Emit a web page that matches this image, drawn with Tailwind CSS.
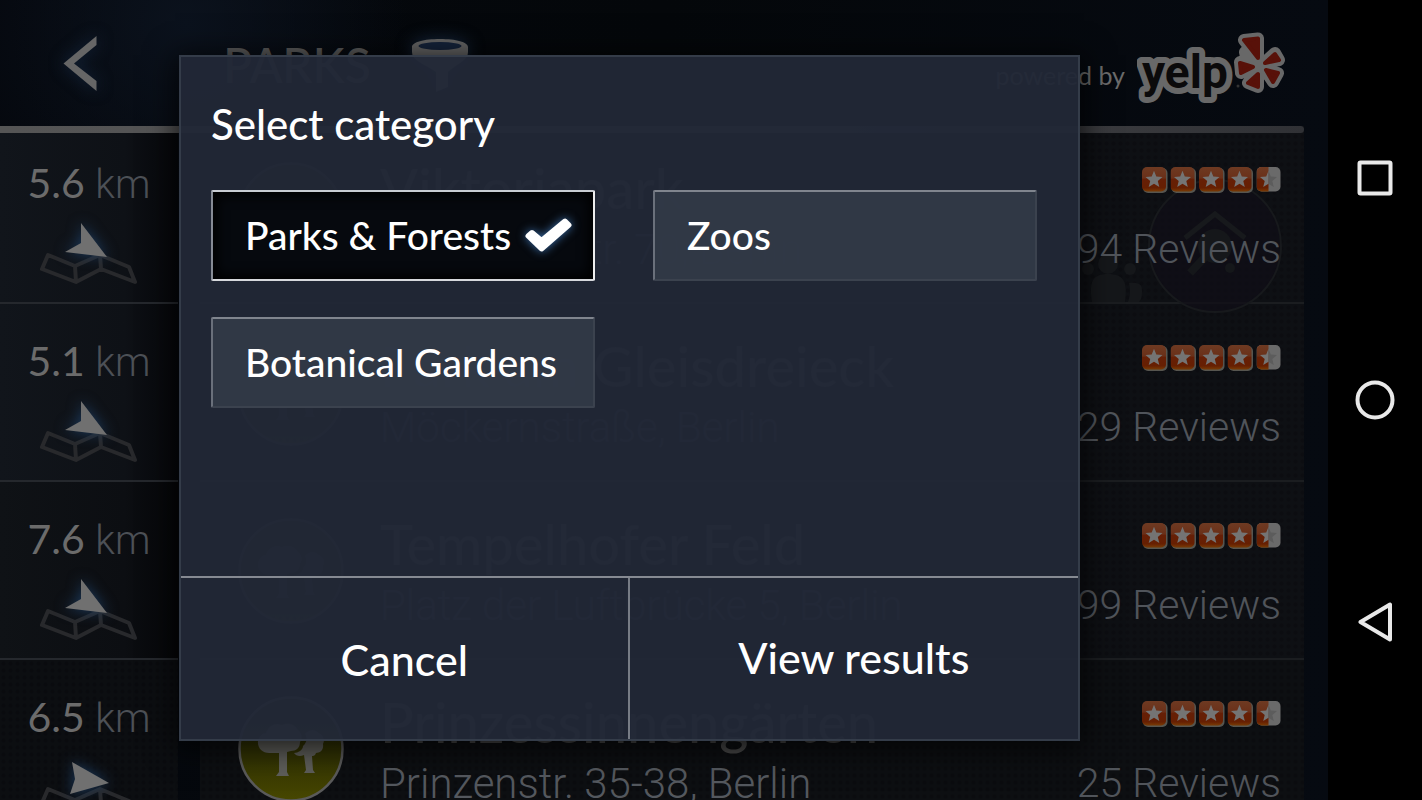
<!DOCTYPE html>
<html lang="en">
<head>
<meta charset="utf-8">
<title>Parks – Select category</title>
<script src="https://cdn.jsdelivr.net/npm/@tailwindcss/browser@4"></script>
</head>
<body class="flex h-screen overflow-hidden bg-black font-['Lato',sans-serif] text-white">

<svg class="absolute size-0" aria-hidden="true">
  <defs>
    <linearGradient id="tile" x1="0" y1="0" x2="0" y2="1">
      <stop offset="0" stop-color="#6e3a22"/><stop offset=".45" stop-color="#6a3019"/><stop offset=".5" stop-color="#661f06"/><stop offset=".85" stop-color="#661f02"/><stop offset="1" stop-color="#7a3c04"/>
    </linearGradient>
    <linearGradient id="olive" x1="0" y1="0" x2="0" y2="1">
      <stop offset="0" stop-color="#2a2a04"/><stop offset=".6" stop-color="#333403"/><stop offset="1" stop-color="#474700"/>
    </linearGradient>
    <symbol id="star" viewBox="0 0 26 26">
      <rect x="1" y="1" width="24.500" height="25" rx="5" fill="#56554f"/>
      <rect width="24" height="24.500" rx="5" fill="url(#tile)"/>
      <path d="M12 3.800l2.300 5.700 6.200.5-4.700 4 1.500 6.100-5.300-3.300-5.300 3.300 1.500-6.100-4.700-4 6.200-.5z" fill="#747474"/>
    </symbol>
    <symbol id="half" viewBox="0 0 26 26">
      <rect width="24" height="24.500" rx="5" fill="#6a6a6a"/>
      <path d="M12 0H5a5 5 0 0 0-5 5v14.500a5 5 0 0 0 5 5h7z" fill="url(#tile)"/>
      <path d="M12 3.800v13L6.700 20.100l1.500-6.100-4.700-4 6.200-.5z" fill="#747474"/>
      <path d="M12 3.800l2.300 5.700 6.200.5-4.700 4 1.500 6.100-5.300-3.300z" fill="#5c5c5c"/>
    </symbol>
    <symbol id="stars" viewBox="0 0 140 26">
      <use href="#star" x="1" width="26" height="26"/>
      <use href="#star" x="29.500" width="26" height="26"/>
      <use href="#star" x="58" width="26" height="26"/>
      <use href="#star" x="86.500" width="26" height="26"/>
      <use href="#half" x="115.500" width="26" height="26"/>
    </symbol>
    <symbol id="map" viewBox="0 0 98 34">
      <path d="M8 4L35 15 60 4 89 16 95 31 61 18 36 31 2 18z M35 15l1 16 M60 4l1 14" fill="none" stroke="#28292c" stroke-width="4" stroke-linejoin="round"/>
    </symbol>
    <symbol id="trees" viewBox="0 0 106 106">
      <circle cx="53" cy="53" r="51.500" fill="url(#olive)" stroke="#5a5a5a" stroke-width="2.500"/>
      <g fill="#5e5e5a">
        <path d="M41 57H33c-8 1-14-5-13-12 1-5 4-8 8-8 2-7 9-11 16-8 6-3 14 0 16 5 4 3 5 8 2 12 0 6-4 9-9 9l-4 1v20l2 4H38l3-4z"/>
        <path d="M66 59c-4 2-8 1-10-2 4 0 9-3 9-7 4-4 4-7 2-12 4-5 10-5 14-1 5 2 6 7 4 11 1 6-3 9-7 9-1 3-3 3-4 3l1 14 2 3H66l2-3z"/>
      </g>
    </symbol>
  </defs>
</svg>

<div class="relative min-w-0 flex-1 overflow-hidden bg-[radial-gradient(circle_at_14%_3%,#0b121d,transparent_16%),linear-gradient(90deg,#05080e,#04070a_50%,#060a11)]">
  <div class="flex h-full flex-col">

    <header class="flex h-[126px] shrink-0 items-start pr-[41px]">
      <button type="button" aria-label="Back" class="mt-9 ml-[62px] w-9 drop-shadow-[0_0_8px_#15273f]">
        <svg viewBox="0 0 36 56" class="h-14 w-9"><path d="M34.500 0v9L12 27.500 34.500 45v10L1.500 27.500z" fill="#666"/></svg>
      </button>
      <h1 class="mt-[38px] ml-[125px] text-[48px] leading-[54px] font-medium text-[#5c5c5c]">PARKS</h1>
      <button type="button" aria-label="Filter" class="mt-[38px] ml-10 drop-shadow-[0_0_8px_#15273f]">
        <svg viewBox="0 0 58 56" class="h-14 w-[58px]"><path d="M29 1c16 0 28 3 28 8v5c0 8-8 10-20 20v15L25 54V34C9 24 1 22 1 14V9c0-5 12-8 28-8z" fill="#646464"/><ellipse cx="29" cy="8" rx="21.500" ry="4" fill="#15233a"/></svg>
      </button>
      <p class="mt-[60px] ml-auto text-[25px] leading-[30px] text-[#6b6b6b]">powered by</p>
      <svg viewBox="0 0 150 72" class="mt-8 ml-3 h-[72px] w-[150px]" role="img" aria-label="yelp">
        <g fill="#686868" stroke="#686868" stroke-width="12" stroke-linejoin="round">
          <path d="M107 8L121 6.500V26zM127 31L138 21 142 28zM128 38L141 41 136 50zM121 41V55L111 51zM103 30L118 35 104 41zM108 20l25 20-20 5z"/>
          <text x="5" y="56" font-family="Roboto, sans-serif" font-weight="700" font-size="46">yelp</text>
        </g>
        <text x="5" y="56" font-family="Roboto, sans-serif" font-weight="700" font-size="46" fill="#0b0a0b">yelp</text>
        <path d="M107 8L121 6.500V26zM128 31L138 22 142 28zM129 38L141 41 136 50zM121 42V55L111 51zM103 31L116 35 104 41z" fill="#581109" stroke="#581109" stroke-width="4" stroke-linejoin="round"/>
        <circle cx="101" cy="54" r="1.500" fill="#333"/>
      </svg>
    </header>

    <div class="relative z-10 mr-6 h-[7px] shrink-0 rounded-r-sm bg-linear-to-r from-[#555] via-[#505052] to-[#303135]"></div>

    <ul class="relative -mt-[7px] min-h-0 flex-1">
      <li class="flex h-[178px]">
        <div class="flex w-[178px] flex-col items-center border-b-2 border-[#25282d] bg-[linear-gradient(90deg,#11151b,#0e1116_70%,#06070a)] pt-[30px]">
          <p class="text-[41px] leading-[54px] text-[#6b6b6b]">5.6 <span class="font-['Roboto'] text-[40px] font-light text-[#4c5056]">km</span></p>
          <svg viewBox="0 0 98 62" class="mt-[11px] h-[62px] w-[98px] overflow-visible"><use href="#map" y="28" width="98" height="34"/><path d="M41 0l26 34-42-5 16-9z" fill="#707070" class="drop-shadow-[0_0_7px_#1d3c60]"/></svg>
        </div>
        <article class="relative mr-6 ml-[22px] flex min-w-0 flex-1 items-start border-b-2 border-[#1b1d20] bg-[#0e1014] bg-[radial-gradient(circle,#0c0d11_1px,transparent_3px)] bg-size-[7px_7px] pr-[23px]">
          <svg class="absolute right-0 bottom-0 h-[150px] w-[236px] overflow-visible" viewBox="0 0 236 150" aria-hidden="true"><circle cx="147" cy="94" r="66" fill="#100e17" fill-opacity=".7" stroke="#17191c" stroke-width="2"/><path d="M117 86l30-24 30 24" fill="none" stroke="#17191c" stroke-width="5"/><circle cx="147" cy="94" r="17" fill="#15171a"/><circle cx="162" cy="116" r="5" fill="#15171a"/><path d="M138 104l-16 17" stroke="#15171a" stroke-width="8"/><g fill="#15171a"><circle cx="40" cy="112" r="10"/><circle cx="62" cy="117" r="6"/><circle cx="20" cy="117" r="6"/><path d="M24 150c-3-20 0-28 16-28s20 8 17 28zM60 150c3-8 2-14 1-19 9-1 13 1 13 7 0 5 0 9-3 12z"/></g></svg>
          <svg class="mt-9 ml-[38px] h-[106px] w-[106px] opacity-60"><use href="#trees"/></svg>
          <div class="relative ml-9 pt-8"><h2 class="text-[56px] leading-[60px] font-medium text-[#484848]">Viktoriapark</h2><p class="pt-0.5 font-['Roboto'] text-[42px] leading-[60px] font-light whitespace-nowrap text-[#3d4248]">Kreuzbergstr. 70, Berlin</p></div>
          <div class="relative ml-auto flex flex-col items-end pt-[41px]"><svg class="h-[26px] w-[140px]" role="img" aria-label="4.5 stars"><use href="#stars"/></svg><p class="mt-[29px] font-['Roboto'] text-[41px] leading-[54px] font-light whitespace-nowrap text-[#50545a]">94 Reviews</p></div>
        </article>
      </li>
      <li class="flex h-[178px]">
        <div class="flex w-[178px] flex-col items-center border-b-2 border-[#25282d] bg-[linear-gradient(90deg,#11151b,#0e1116_70%,#06070a)] pt-[30px]">
          <p class="text-[41px] leading-[54px] text-[#6b6b6b]">5.1 <span class="font-['Roboto'] text-[40px] font-light text-[#4c5056]">km</span></p>
          <svg viewBox="0 0 98 62" class="mt-[11px] h-[62px] w-[98px] overflow-visible"><use href="#map" y="28" width="98" height="34"/><path d="M41 0l26 34-42-5 16-9z" fill="#707070" class="drop-shadow-[0_0_7px_#1d3c60]"/></svg>
        </div>
        <article class="mr-6 ml-[22px] flex min-w-0 flex-1 items-start border-b-2 border-[#1b1d20] bg-[#0e1014] bg-[radial-gradient(circle,#0c0d11_1px,transparent_3px)] bg-size-[7px_7px] pr-[23px]">
          <svg class="mt-9 ml-[38px] h-[106px] w-[106px] opacity-60"><use href="#trees"/></svg>
          <div class="ml-9 pt-8"><h2 class="text-[56px] leading-[60px] font-medium whitespace-nowrap text-[#484848]">Park am Gleisdreieck</h2><p class="pt-0.5 font-['Roboto'] text-[42px] leading-[60px] font-light text-[#3d4248]">Möckernstraße, Berlin</p></div>
          <div class="ml-auto flex flex-col items-end pt-[41px]"><svg class="h-[26px] w-[140px]" role="img" aria-label="4.5 stars"><use href="#stars"/></svg><p class="mt-[29px] font-['Roboto'] text-[41px] leading-[54px] font-light whitespace-nowrap text-[#50545a]">29 Reviews</p></div>
        </article>
      </li>
      <li class="flex h-[178px]">
        <div class="flex w-[178px] flex-col items-center border-b-2 border-[#25282d] bg-[linear-gradient(90deg,#0f1216,#0c0e12_70%,#050608)] pt-[30px]">
          <p class="text-[41px] leading-[54px] text-[#6b6b6b]">7.6 <span class="font-['Roboto'] text-[40px] font-light text-[#4c5056]">km</span></p>
          <svg viewBox="0 0 98 62" class="mt-[11px] h-[62px] w-[98px] overflow-visible"><use href="#map" y="28" width="98" height="34"/><path d="M41 0l26 34-42-5 16-9z" fill="#707070" class="drop-shadow-[0_0_7px_#1d3c60]"/></svg>
        </div>
        <article class="mr-6 ml-[22px] flex min-w-0 flex-1 items-start border-b-2 border-[#1b1d20] bg-[#0e1014] bg-[radial-gradient(circle,#0c0d11_1px,transparent_3px)] bg-size-[7px_7px] pr-[23px]">
          <svg class="mt-9 ml-[38px] h-[106px] w-[106px] opacity-60"><use href="#trees"/></svg>
          <div class="ml-9 pt-8"><h2 class="text-[56px] leading-[60px] font-medium whitespace-nowrap text-[#484848]">Tempelhofer Feld</h2><p class="pt-0.5 font-['Roboto'] text-[42px] leading-[60px] font-light whitespace-nowrap text-[#3d4248]">Platz der Luftbrücke 5, Berlin</p></div>
          <div class="ml-auto flex flex-col items-end pt-[41px]"><svg class="h-[26px] w-[140px]" role="img" aria-label="4.5 stars"><use href="#stars"/></svg><p class="mt-[29px] font-['Roboto'] text-[41px] leading-[54px] font-light whitespace-nowrap text-[#50545a]">99 Reviews</p></div>
        </article>
      </li>
      <li class="flex h-[178px]">
        <div class="flex w-[178px] flex-col items-center bg-[#0c0e11] bg-[radial-gradient(circle,#0a0b0e_1px,transparent_3px)] bg-size-[7px_7px] pt-[30px]">
          <p class="text-[41px] leading-[54px] text-[#6b6b6b]">6.5 <span class="font-['Roboto'] text-[40px] font-light text-[#4c5056]">km</span></p>
          <svg viewBox="0 0 98 62" class="mt-[11px] h-[62px] w-[98px] overflow-visible"><use href="#map" y="28" width="98" height="34"/><path d="M32 5l37 21-39 11 5-15z" fill="#707070" class="drop-shadow-[0_0_7px_#1d3c60]"/></svg>
        </div>
        <article class="relative mr-6 ml-[22px] flex min-w-0 flex-1 items-start bg-[#0d0f12] bg-[radial-gradient(circle,#0b0c0f_1px,transparent_3px)] bg-size-[7px_7px] pr-[23px]">
          <svg class="mt-9 ml-[38px] h-[106px] w-[106px]"><use href="#trees"/></svg>
          <div class="ml-9 pt-8"><h2 class="text-[56px] leading-[60px] font-medium text-[#484848]">Prinzessinnengärten</h2><p class="pt-0.5 font-['Roboto'] text-[42px] leading-[60px] font-light whitespace-nowrap text-[#54585e]">Prinzenstr. 35-38, Berlin</p></div>
          <div class="ml-auto flex flex-col items-end pt-[41px]"><svg class="h-[26px] w-[140px]" role="img" aria-label="4.5 stars"><use href="#stars"/></svg><p class="mt-[29px] font-['Roboto'] text-[41px] leading-[54px] font-light whitespace-nowrap text-[#50545a]">25 Reviews</p></div>
        </article>
      </li>
    </ul>
  </div>

  <form role="dialog" aria-labelledby="dlg" class="absolute top-[55px] right-[248px] left-[179px] z-20 border-2 border-[#343c49] bg-[#212836]/96 shadow-[0_4px_28px_4px_rgba(0,0,0,0.7)]">
    <div class="h-[519px] pt-10 pr-[41px] pl-[30px]">
      <h2 id="dlg" class="text-[42px] leading-[54px] font-medium">Select category</h2>
      <div class="mt-[39px] grid grid-cols-2 gap-x-[58px] gap-y-9 text-[39px] font-medium">
        <label class="flex h-[91px] items-center gap-3.5 rounded-xs border-2 border-t-[#c8ccd2] border-r-[#eee] border-b-[#d6d8dc] border-l-[#868b95] bg-[#06090e] pl-8 whitespace-nowrap shadow-[inset_0_0_12px_4px_#000]">
          <input type="checkbox" class="sr-only" checked>Parks &amp; Forests
          <svg viewBox="0 0 48 36" class="h-9 w-12 overflow-visible drop-shadow-[0_0_5px_#3a6da8]"><path d="M3 18L7 14.500 16.500 22.500 40 3 44 7 16.500 31z" fill="#fff" stroke="#fff" stroke-width="5" stroke-linejoin="round"/></svg>
        </label>
        <label class="flex h-[91px] items-center rounded-xs border-2 border-t-[#80858e] border-r-[#3b424e] border-b-[#3b424e] border-l-[#6a707b] bg-[#323947]/95 pl-8">
          <input type="checkbox" class="sr-only">Zoos
        </label>
        <label class="flex h-[91px] items-center rounded-xs border-2 border-t-[#80858e] border-r-[#3b424e] border-b-[#3b424e] border-l-[#6a707b] bg-[#323947]/95 pl-8 whitespace-nowrap">
          <input type="checkbox" class="sr-only">Botanical Gardens
        </label>
      </div>
    </div>
    <div class="grid grid-cols-2 border-t-2 border-[#868a92] text-[43px] font-medium">
      <button type="button" class="h-[161px] border-r-2 border-[#777c85] pt-1">Cancel</button>
      <button type="submit" class="h-[161px]">View results</button>
    </div>
  </form>
</div>

<nav aria-label="System" class="flex w-[94px] shrink-0 flex-col items-center justify-around bg-black py-[67px]">
  <button type="button" aria-label="Recents"><svg viewBox="0 0 40 40" class="size-10"><rect x="4.500" y="4.500" width="31" height="31" rx="1" fill="none" stroke="#e9e9e9" stroke-width="4"/></svg></button>
  <button type="button" aria-label="Home"><svg viewBox="0 0 40 40" class="size-10"><circle cx="20" cy="20" r="17.500" fill="none" stroke="#e9e9e9" stroke-width="4"/></svg></button>
  <button type="button" aria-label="Back"><svg viewBox="0 0 40 40" class="size-10"><path d="M35 2.500v35L5.500 20z" fill="none" stroke="#e9e9e9" stroke-width="4" stroke-linejoin="round"/></svg></button>
</nav>
</body>
</html>
